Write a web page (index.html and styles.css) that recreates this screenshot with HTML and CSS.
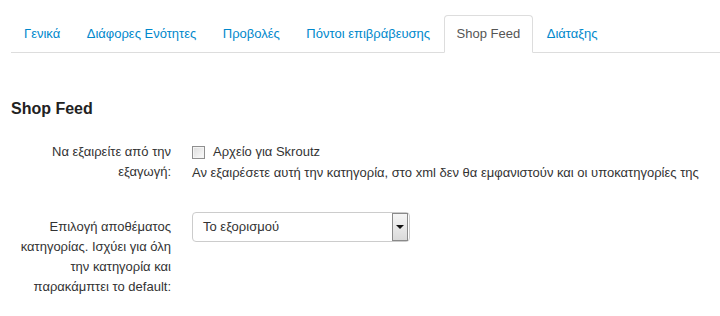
FILE: index.html
```
<!DOCTYPE html>
<html>
<head>
    <meta charset="utf-8" />
    <title>Shop Feed</title>
    <link rel="stylesheet" href="styles.css">
</head>
<body>
    <ul class="tabs">
        <li><a href="#">Γενικά</a></li>
        <li><a href="#">Διάφορες Ενότητες</a></li>
        <li><a href="#">Προβολές</a></li>
        <li><a href="#">Πόντοι επιβράβευσης</a></li>
        <li class="active"><a href="#">Shop Feed</a></li>
        <li><a href="#">Διάταξης</a></li>
    </ul>

    <h3>Shop Feed</h3>

    <div class="form">
        <div class="row">
            <div class="label">Να εξαιρείτε από την εξαγωγή:</div>
            <div class="controls">
                <label class="check"><span class="box"></span>Αρχείο για Skroutz</label>
                <div class="help">Αν εξαιρέσετε αυτή την κατηγορία, στο xml δεν θα εμφανιστούν και οι υποκατηγορίες της</div>
            </div>
        </div>
        <div class="row">
            <div class="label pad">Επιλογή αποθέματος κατηγορίας. Ισχύει για όλη την κατηγορία και παρακάμπτει το default:</div>
            <div class="controls">
                <div class="select">
                    <span>Το εξορισμού</span>
                    <span class="arrow"></span>
                </div>
            </div>
        </div>
    </div>
</body>
</html>
```

FILE: styles.css
```
body {
    margin: 0;
    padding: 0 0 0 11px;
    font-family: "Liberation Sans", Arial, sans-serif;
    font-size: 13px;
    color: #333;
    background: #fff;
}

ul.tabs {
    list-style: none;
    margin: 15px 0 0 0;
    padding: 0;
    display: flex;
    border-bottom: 1px solid #ddd;
}

ul.tabs li {
    margin: 0 0.5px -1px 0;
}

ul.tabs li a {
    display: block;
    padding: 10px 12px;
    line-height: 16px;
    border: 1px solid transparent;
    border-radius: 4px 4px 0 0;
    color: #0088cc;
    text-decoration: none;
}

ul.tabs li.active a {
    color: #555;
    background: #fff;
    border-color: #ddd #ddd transparent #ddd;
}

h3 {
    margin: 46px 0 23px 0;
    font-size: 16px;
    line-height: 20px;
    font-weight: bold;
    color: #222;
}

div.row {
    display: grid;
    grid-template-columns: 160px auto;
    column-gap: 21px;
    margin-bottom: 29px;
}

div.label {
    text-align: right;
    line-height: 20px;
}

div.label.pad {
    padding-top: 5px;
}

div.controls {
    line-height: 20px;
}

label.check {
    display: flex;
    align-items: center;
    height: 20px;
}

span.box {
    width: 11px;
    height: 11px;
    border: 1px solid #8f8f8f;
    background: linear-gradient(135deg, #dcdcdc, #fbfbfb);
    box-shadow: inset 0 0 0 1px #f4f4f4;
    margin-right: 8px;
}

div.help {
    margin-top: 1px;
}

div.select {
    width: 206px;
    height: 28px;
    border: 1px solid #ccc;
    border-radius: 4px;
    display: flex;
    align-items: center;
    justify-content: space-between;
    padding-left: 10px;
}

span.arrow {
    width: 14px;
    height: 26px;
    margin-right: 1px;
    border: 1px solid #8a8a8a;
    background: linear-gradient(#f6f6f6, #dadada);
    position: relative;
}

span.arrow:after {
    content: '';
    position: absolute;
    left: 3px;
    top: 11px;
    border-left: 4px solid transparent;
    border-right: 4px solid transparent;
    border-top: 4px solid #111;
}
```
